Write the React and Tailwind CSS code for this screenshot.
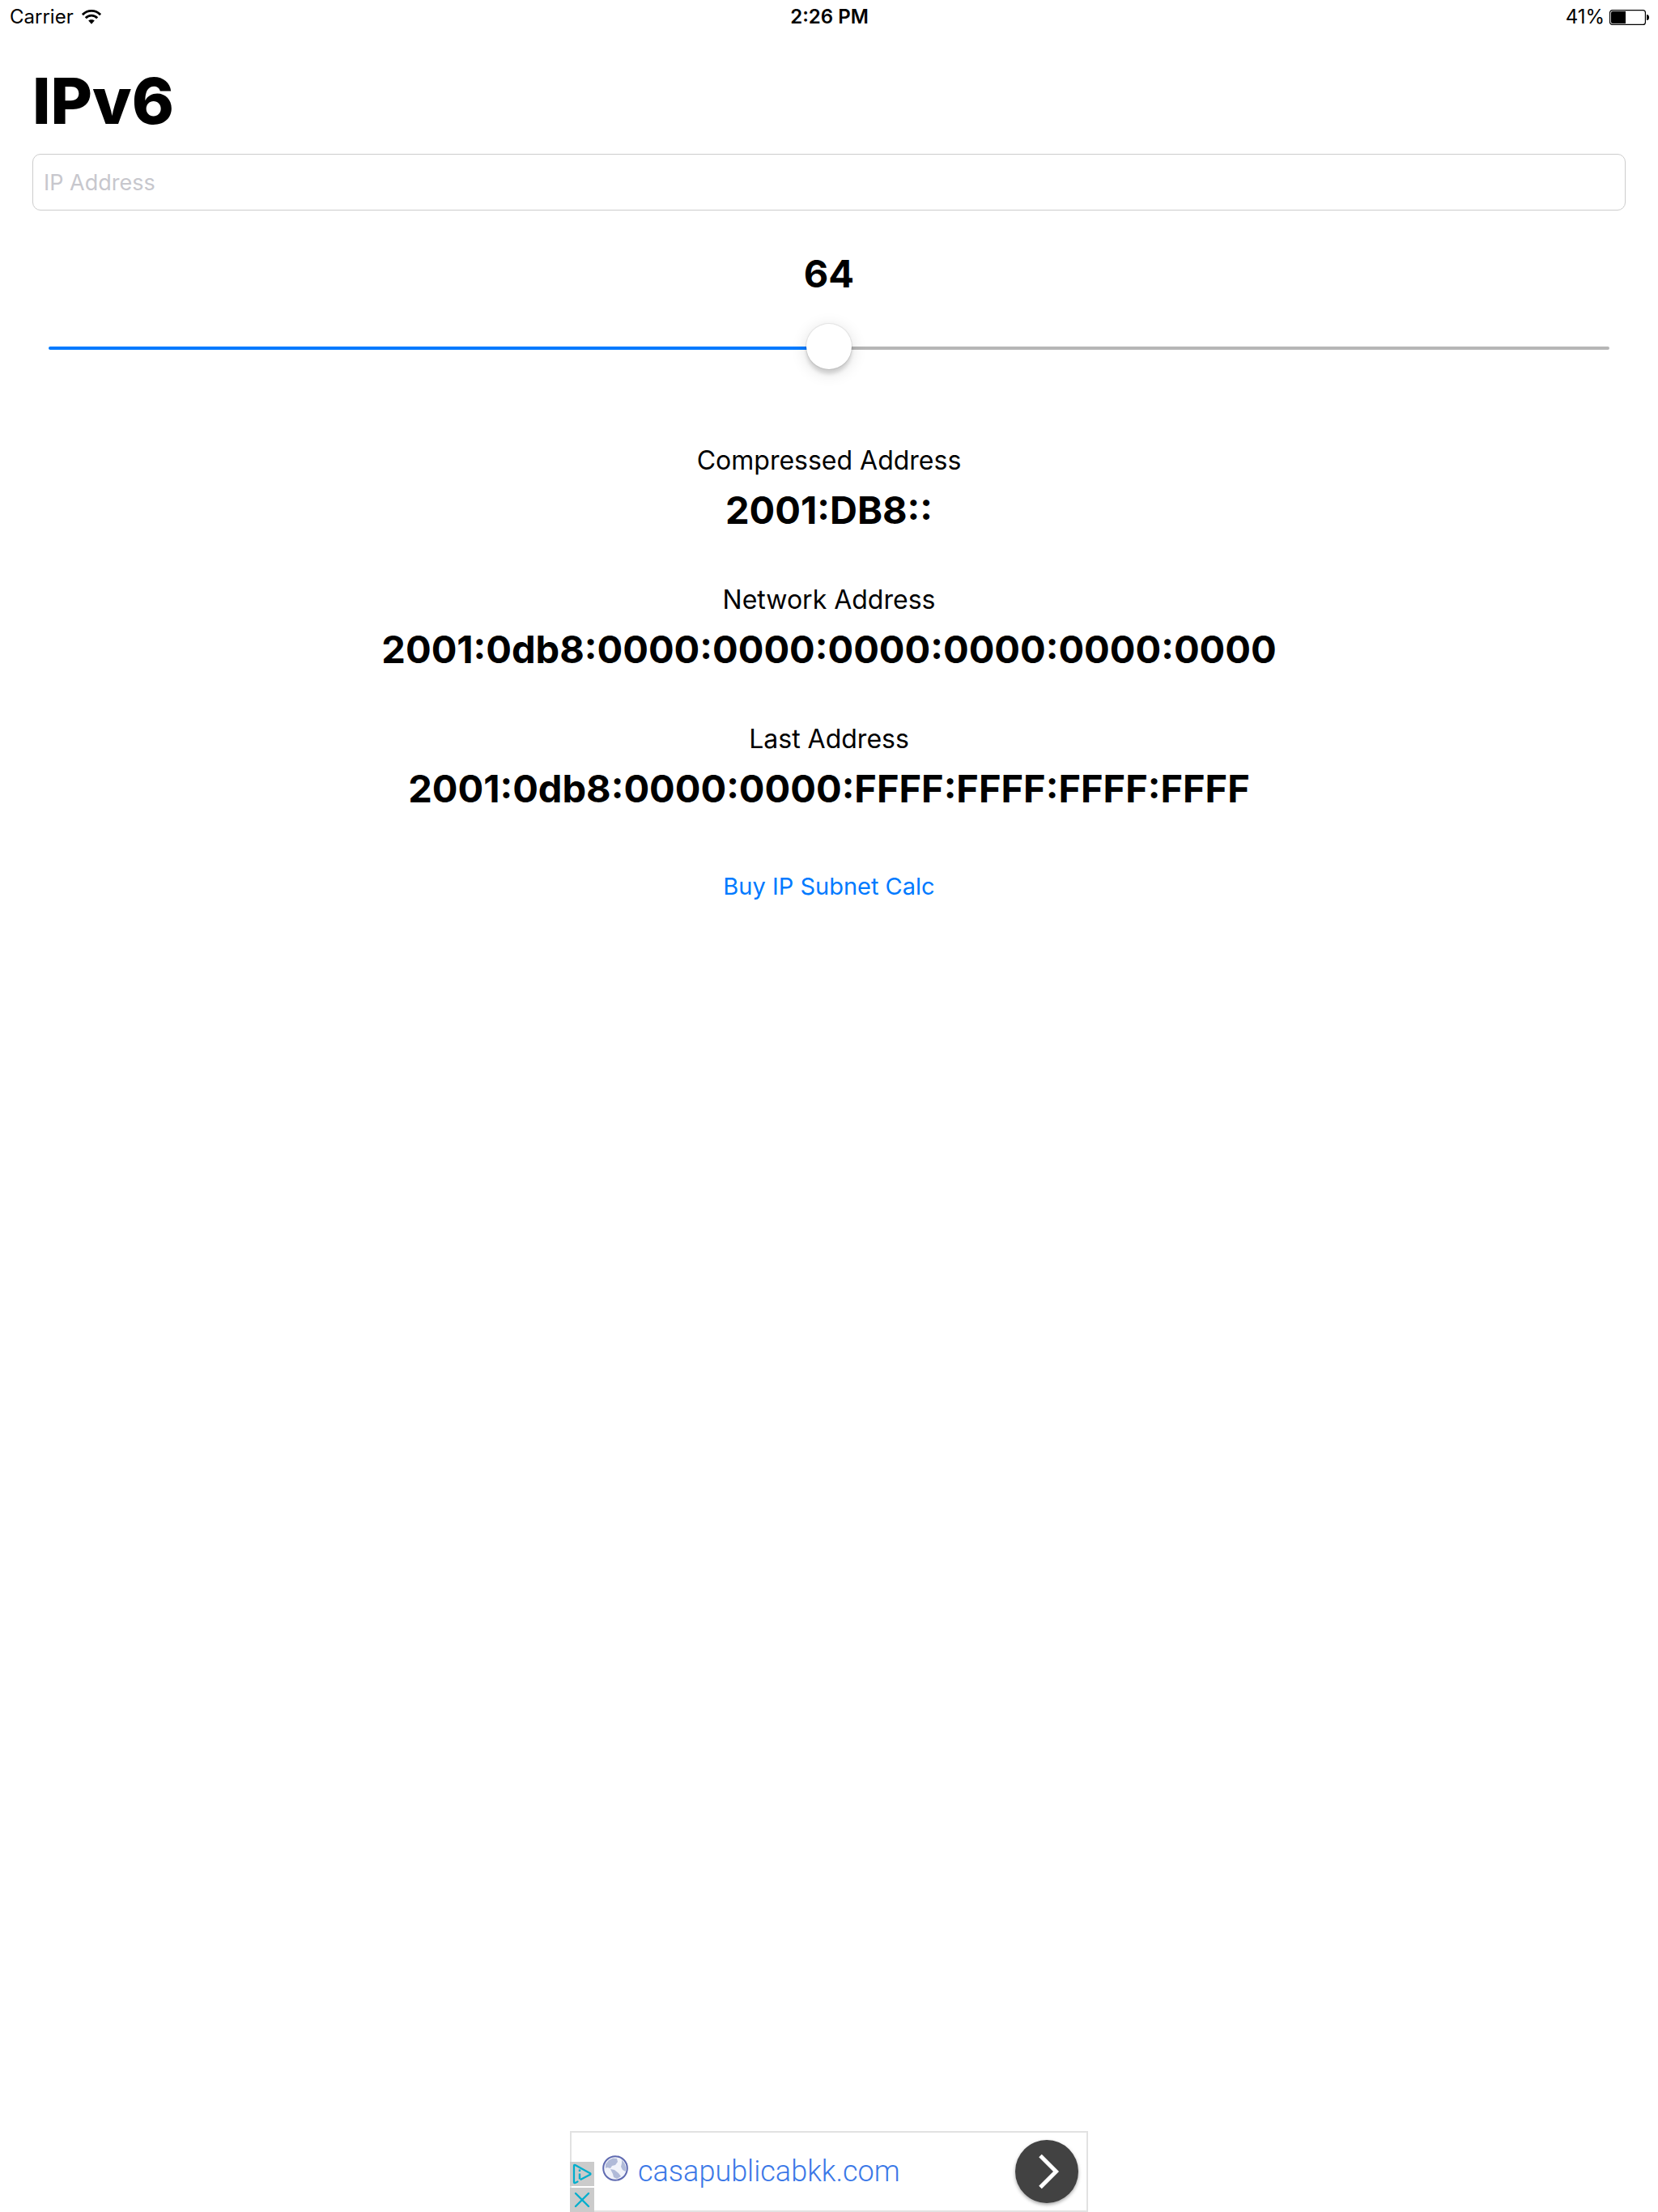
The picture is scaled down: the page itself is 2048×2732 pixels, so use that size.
import { useState } from 'react';

const results = [
  { label: 'Compressed Address', value: '2001:DB8::' },
  { label: 'Network Address', value: '2001:0db8:0000:0000:0000:0000:0000:0000' },
  { label: 'Last Address', value: '2001:0db8:0000:0000:FFFF:FFFF:FFFF:FFFF' },
];

const MAX_PREFIX = 128;

function WifiIcon() {
  return (
    <svg viewBox="0 0 24 18" className="h-[18px] w-6" fill="none" stroke="#000" strokeWidth="2.8" aria-hidden="true">
      <path d="M0.9 6.2C7 -0.2 17 -0.2 23.1 6.2" />
      <path d="M4.8 10.2C8.8 6 15.2 6 19.2 10.2" />
      <path d="M12 17.8L8.2 13.6C10.2 11.7 13.8 11.7 15.8 13.6Z" fill="#000" stroke="none" />
    </svg>
  );
}

function BatteryIcon() {
  return (
    <svg viewBox="0 0 49 19" className="h-[19px] w-[49px]" aria-hidden="true">
      <rect x="0.6" y="0.6" width="43.8" height="17.8" rx="3" fill="none" stroke="#000" strokeWidth="1.2" />
      <path d="M4 2H20V17H4Q2 17 2 15V4Q2 2 4 2Z" />
      <path d="M46 6Q49 6 49 9.5Q49 13 46 13Z" />
    </svg>
  );
}

function GlobeIcon() {
  return (
    <svg viewBox="0 0 32 32" className="size-8" aria-hidden="true">
      <circle cx="16" cy="16" r="14.8" fill="#f1f3fa" stroke="#5f6ab0" strokeWidth="2" />
      <path d="M4 11L8 6L13 3.5L18 4L19 8L16 12L12 13L10 16L6 15L4 16Z" fill="#b0bad8" />
      <path d="M24 5.5L27.5 10L29.5 16L28.5 20L25 18L23 14L24 10Z" fill="#b0bad8" />
      <path d="M10 17L15 18L20 22L23 26L18 29L14 27L13 23Z" fill="#b0bad8" />
    </svg>
  );
}

function AdChoicesIcon() {
  return (
    <svg viewBox="0 0 30 30" className="size-[30px]" fill="none" stroke="#00aecd" strokeWidth="2.2" strokeLinejoin="round" aria-hidden="true">
      <path d="M9.5 24.5L6.5 26Q5 26.5 5 25V5Q5 3.5 6.5 4L25 14.2Q26 15 25 15.8L13.5 21.8" strokeLinecap="round" />
      <path d="M12 14.5V21.5M12 9.5V12" strokeWidth="2.4" />
    </svg>
  );
}

function StatusBar() {
  return (
    <header className="grid h-[42px] grid-cols-3 items-center pl-3 pr-[11px] text-2xl">
      <div className="flex items-center gap-2.5">
        <span>Carrier</span>
        <WifiIcon />
      </div>
      <span className="text-center font-semibold">2:26 PM</span>
      <div className="flex items-center justify-end gap-1.5">
        <span>41%</span>
        <BatteryIcon />
      </div>
    </header>
  );
}

function AdBanner() {
  return (
    <aside className="relative flex h-[100px] w-[640px] items-center border-2 border-[#e2e2e2] bg-white pl-[38px] pr-2.5">
      <a href="#ad" className="flex flex-1 items-center gap-3 font-['Roboto',sans-serif] text-4xl font-light text-[#3b78e7]">
        <span className="-mt-2">
          <GlobeIcon />
        </span>
        casapublicabkk.com
      </a>
      <button aria-label="Open" className="flex size-[78px] items-center justify-center rounded-full bg-[#424242] shadow-[0_2px_4px_rgba(0,0,0,0.35)]">
        <svg viewBox="0 0 78 78" className="size-[78px]" fill="none" stroke="#fff" strokeWidth="5" aria-hidden="true">
          <path d="M31 19.5L50.5 39L31 58.5" />
        </svg>
      </button>

      {/* ad controls over the corner */}
      <div className="absolute -bottom-0.5 -left-0.5 flex flex-col gap-0.5">
        <button aria-label="Ad choices" className="size-[30px] bg-[#cbcbcb]">
          <AdChoicesIcon />
        </button>
        <button aria-label="Close ad" className="size-[30px] bg-[#cbcbcb]">
          <svg viewBox="0 0 30 30" className="size-[30px]" stroke="#00aecd" strokeWidth="2.4" strokeLinecap="round" aria-hidden="true">
            <path d="M7 7L23 23M23 7L7 23" />
          </svg>
        </button>
      </div>
    </aside>
  );
}

export default function App() {
  const [address, setAddress] = useState('');
  const [prefix, setPrefix] = useState(64);

  const percent = (prefix / MAX_PREFIX) * 100;

  return (
    <div className="flex min-h-screen flex-col bg-white font-['Inter',sans-serif] text-black">
      <StatusBar />

      <main className="flex flex-1 flex-col px-10 pt-[34px]">
        <h1 className="text-[79px] leading-[96px] font-extrabold">IPv6</h1>

        <input
          type="text"
          aria-label="IP Address"
          placeholder="IP Address"
          value={address}
          onChange={(e) => setAddress(e.target.value)}
          className="mt-[18px] h-[70px] w-full rounded-[10px] border border-[#cccccc] px-[13px] text-[27px] placeholder:text-[#c7c7cd]"
        />

        <output htmlFor="prefix" className="mt-12 text-center text-[47px] leading-[60px] font-bold">
          {prefix}
        </output>

        <div className="mt-[34px] flex h-14 items-center px-5">
          <input
            id="prefix"
            type="range"
            aria-label="Prefix length"
            min="0"
            max={MAX_PREFIX}
            value={prefix}
            onChange={(e) => setPrefix(Number(e.target.value))}
            style={{ backgroundImage: `linear-gradient(to right, #007aff ${percent}%, #b6b6b6 ${percent}%)` }}
            className="h-1 w-full appearance-none rounded-full [&::-webkit-slider-runnable-track]:h-1 [&::-webkit-slider-thumb]:-mt-7 [&::-webkit-slider-thumb]:size-14 [&::-webkit-slider-thumb]:appearance-none [&::-webkit-slider-thumb]:rounded-full [&::-webkit-slider-thumb]:bg-white [&::-webkit-slider-thumb]:shadow-[0_0_1px_1px_rgba(0,0,0,0.08),0_6px_4px_rgba(0,0,0,0.12),0_4px_20px_rgba(0,0,0,0.14)]"
          />
        </div>

        <dl className="mt-[89px] flex flex-col gap-[58px] text-center">
          {results.map((item) => (
            <div key={item.label} className="flex flex-col gap-2">
              <dt className="text-[32px] leading-[44px]">{item.label}</dt>
              <dd className="text-[47px] leading-[62px] font-bold">{item.value}</dd>
            </div>
          ))}
        </dl>

        <button className="mt-[70px] self-center text-[29px] leading-10 text-[#007aff]">Buy IP Subnet Calc</button>
      </main>

      <footer className="flex justify-center">
        <AdBanner />
      </footer>
    </div>
  );
}
